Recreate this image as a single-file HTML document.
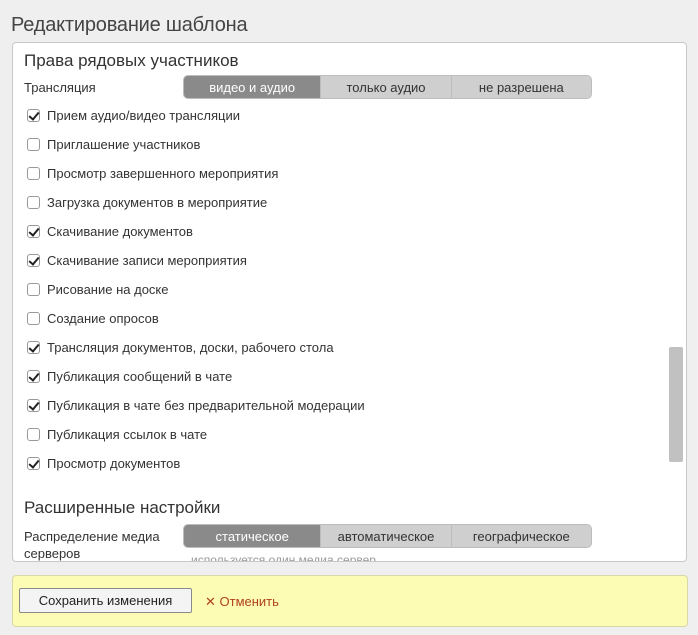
<!DOCTYPE html>
<html><head><meta charset="utf-8"><style>
*{box-sizing:border-box;margin:0;padding:0}
body{width:698px;height:635px;background:#efefef;font-family:"Liberation Sans",sans-serif;color:#333;position:relative;overflow:hidden}
h1{position:absolute;left:11px;top:14px;font-size:20px;font-weight:normal;color:#444;letter-spacing:-0.2px}
.panel{position:absolute;left:12px;top:42px;width:675px;height:520px;background:#fff;border:1px solid #c8c8c8;border-radius:4px;overflow:hidden}
.h2{position:absolute;left:11px;font-size:17px;color:#333}
.lbl{position:absolute;left:11px;font-size:13px;color:#333;line-height:17px}
.seg{position:absolute;left:170px;width:409px;height:24px;border:1px solid #bdbdbd;border-radius:5px;display:flex;overflow:hidden;background:#cfcfcf;font-size:13px}
.seg div{display:flex;align-items:center;justify-content:center;color:#333;border-left:1px solid #bdbdbd}
.seg div.on{background:#8a8a8a;color:#fff;border-left:none}
.row{position:absolute;left:14px;font-size:13px;color:#333;display:flex;align-items:center;height:16px}
.cb{width:13px;height:13px;border:1px solid #999;border-radius:3px;margin-right:7px;position:relative;background:#fff}
.cb.c:after{content:"";position:absolute;left:3px;top:0px;width:4px;height:8px;border:solid #222;border-width:0 2px 2px 0;transform:rotate(40deg)}
.sb{position:absolute;left:656px;top:304px;width:14px;height:115px;background:#c1c1c1;border-radius:2px}
.foot{position:absolute;left:12px;top:575px;width:676px;height:52px;background:#fcfcb5;border:1px solid #d8d8a8;border-radius:4px}
.btn{position:absolute;left:6px;top:12px;width:173px;height:25px;border:1px solid #8a8a8a;border-radius:2px;background:#f4f4f4;font-size:13px;display:flex;align-items:center;justify-content:center;color:#222}
.cancel{position:absolute;left:192px;top:18px;font-size:13px;color:#b04020}
</style></head><body>
<h1>Редактирование шаблона</h1>
<div class="panel">
<div class="h2" style="top:8px">Права рядовых участников</div>
<div class="lbl" style="top:36px">Трансляция</div>
<div class="seg" style="top:32px"><div class="on" style="width:137px">видео и аудио</div><div style="width:131px">только аудио</div><div style="width:141px">не разрешена</div></div>
<div class="row" style="top:64px"><span class="cb c"></span>Прием аудио/видео трансляции</div>
<div class="row" style="top:93px"><span class="cb"></span>Приглашение участников</div>
<div class="row" style="top:122px"><span class="cb"></span>Просмотр завершенного мероприятия</div>
<div class="row" style="top:151px"><span class="cb"></span>Загрузка документов в мероприятие</div>
<div class="row" style="top:180px"><span class="cb c"></span>Скачивание документов</div>
<div class="row" style="top:209px"><span class="cb c"></span>Скачивание записи мероприятия</div>
<div class="row" style="top:238px"><span class="cb"></span>Рисование на доске</div>
<div class="row" style="top:267px"><span class="cb"></span>Создание опросов</div>
<div class="row" style="top:296px"><span class="cb c"></span>Трансляция документов, доски, рабочего стола</div>
<div class="row" style="top:325px"><span class="cb c"></span>Публикация сообщений в чате</div>
<div class="row" style="top:354px"><span class="cb c"></span>Публикация в чате без предварительной модерации</div>
<div class="row" style="top:383px"><span class="cb"></span>Публикация ссылок в чате</div>
<div class="row" style="top:412px"><span class="cb c"></span>Просмотр документов</div>
<div class="h2" style="top:455px">Расширенные настройки</div>
<div class="lbl" style="top:485px">Распределение медиа<br>серверов</div>
<div class="seg" style="top:481px"><div class="on" style="width:137px">статическое</div><div style="width:131px">автоматическое</div><div style="width:141px">географическое</div></div>
<div class="lbl" style="top:509px;left:178px;color:#999;font-size:12px">используется один медиа сервер</div>
<div class="sb"></div>
</div>
<div class="foot"><div class="btn">Сохранить изменения</div><div class="cancel">✕ Отменить</div></div>
</body></html>
